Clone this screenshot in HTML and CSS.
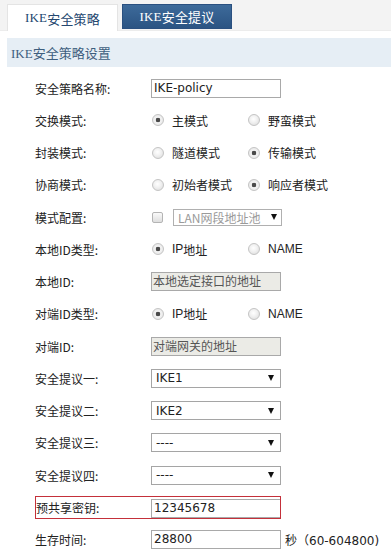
FILE: index.html
```html
<!DOCTYPE html>
<html>
<head>
<meta charset="utf-8">
<link rel="stylesheet" href="styles.css">
</head>
<body>
<div class="tabs">
  <div class="tab active"><span class="lat">IKE</span>安全策略</div>
  <div class="tab other"><span class="lat">IKE</span>安全提议</div>
</div>
<div class="panel-title"><span class="lat">IKE</span>安全策略设置</div>
<div class="form">
  <div class="row"><div class="label">安全策略名称:</div><div class="input">IKE-policy</div></div>
  <div class="row"><div class="label">交换模式:</div>
    <div class="opt"><span class="radio on"></span>主模式</div>
    <div class="opt"><span class="radio"></span>野蛮模式</div></div>
  <div class="row"><div class="label">封装模式:</div>
    <div class="opt"><span class="radio"></span>隧道模式</div>
    <div class="opt"><span class="radio on"></span>传输模式</div></div>
  <div class="row"><div class="label">协商模式:</div>
    <div class="opt"><span class="radio"></span>初始者模式</div>
    <div class="opt"><span class="radio on"></span>响应者模式</div></div>
  <div class="row"><div class="label">模式配置:</div>
    <span class="check"></span>
    <div class="minisel"><span>LAN网段地址池</span><span class="arrow"></span></div></div>
  <div class="row"><div class="label">本地ID类型:</div>
    <div class="opt"><span class="radio on"></span><span class="sans">IP</span>地址</div>
    <div class="opt"><span class="radio"></span><span class="sans">NAME</span></div></div>
  <div class="row"><div class="label">本地ID:</div><div class="input disabled">本地选定接口的地址</div></div>
  <div class="row"><div class="label">对端ID类型:</div>
    <div class="opt"><span class="radio on"></span><span class="sans">IP</span>地址</div>
    <div class="opt"><span class="radio"></span><span class="sans">NAME</span></div></div>
  <div class="row"><div class="label">对端ID:</div><div class="input disabled">对端网关的地址</div></div>
  <div class="row"><div class="label">安全提议一:</div><div class="select"><span>IKE1</span><span class="arrow"></span></div></div>
  <div class="row"><div class="label">安全提议二:</div><div class="select"><span>IKE2</span><span class="arrow"></span></div></div>
  <div class="row"><div class="label">安全提议三:</div><div class="select"><span>----</span><span class="arrow"></span></div></div>
  <div class="row"><div class="label">安全提议四:</div><div class="select"><span>----</span><span class="arrow"></span></div></div>
  <div class="row"><div class="highlight"><div class="label">预共享密钥:</div><div class="input">12345678</div></div></div>
  <div class="row"><div class="label">生存时间:</div><div class="input">28800</div><div class="unit">秒（<span class="num">60-604800)</span></div></div>
</div>
</body>
</html>
```

FILE: styles.css
```css
html, body {
  margin: 0;
  padding: 0;
  background: #ffffff;
}
body {
  font-family: "Noto Sans CJK SC", "DejaVu Sans", sans-serif;
  font-size: 12px;
  color: #222;
  width: 391px;
  overflow: hidden;
}
.lat {
  font-family: "Liberation Serif", serif;
}
.sans {
  font-family: "Liberation Sans", sans-serif;
}
.tabs {
  display: flex;
  align-items: flex-end;
  gap: 4px;
  height: 31px;
  padding-left: 7px;
  box-sizing: border-box;
  background: #f3f3f3;
  border-bottom: 1px solid #ececec;
}
.tab {
  box-sizing: border-box;
  display: flex;
  align-items: center;
  justify-content: center;
  font-size: 13px;
  letter-spacing: 0.2px;
}
.tab.active {
  width: 111px;
  height: 27px;
  margin-bottom: -1px;
  background: #ffffff;
  border: 1px solid #e4e4e4;
  border-bottom: none;
  color: #24476f;
}
.tab.other {
  width: 110px;
  height: 25px;
  margin-bottom: 1px;
  background: linear-gradient(#3d6a9a, #2b5483);
  border: 1px solid #2a5080;
  color: #ffffff;
}
.panel-title {
  margin: 7px 0 0 7px;
  height: 29px;
  line-height: 29px;
  padding-left: 4px;
  background: #e6eef5;
  color: #3e5e7e;
  font-size: 13px;
}
.form {
  padding-top: 5px;
}
.row {
  display: flex;
  align-items: center;
  height: 32.25px;
  padding-left: 35px;
}
.label {
  width: 116px;
  flex: none;
  white-space: nowrap;
}
.input {
  box-sizing: border-box;
  width: 130px;
  height: 19px;
  border: 1px solid #a9a9a9;
  padding-left: 2px;
  font-family: "DejaVu Sans", sans-serif;
  font-size: 12px;
  line-height: 17px;
  color: #222;
  background: #fff;
}
.input.disabled {
  background: #ebebe6;
  color: #555;
  font-family: "Noto Sans CJK SC", sans-serif;
  padding-left: 1px;
  line-height: 16px;
}
.opt {
  display: flex;
  align-items: center;
  width: 96px;
  flex: none;
  white-space: nowrap;
}
.radio {
  box-sizing: border-box;
  width: 12px;
  height: 12px;
  border-radius: 50%;
  border: 1px solid #c4c4c4;
  background: radial-gradient(circle at 45% 40%, #ffffff 0, #f2f2f2 40%, #d9d9d9 100%);
  margin: 0 8px 0 1px;
  flex: none;
}
.radio.on {
  background: radial-gradient(circle, #4a4a4a 0, #4a4a4a 2px, #f4f4f4 2.6px, #e0e0e0 100%);
}
.check {
  box-sizing: border-box;
  width: 11px;
  height: 11px;
  border: 1px solid #b4b4b4;
  border-radius: 2px;
  background: linear-gradient(#fafafa, #dedede);
  margin: 0 10px 0 1px;
  flex: none;
}
.minisel {
  box-sizing: border-box;
  width: 109px;
  height: 17px;
  border: 1px solid #b0b0b0;
  display: flex;
  align-items: center;
  justify-content: space-between;
  padding: 0 4px 0 4px;
  color: #9a9a9a;
}
.select {
  box-sizing: border-box;
  width: 130px;
  height: 19px;
  border: 1px solid #a5a5a5;
  display: flex;
  align-items: center;
  justify-content: space-between;
  padding: 0 6px 0 4px;
  font-family: "DejaVu Sans", sans-serif;
  font-size: 12px;
  color: #222;
}
.arrow {
  width: 0;
  height: 0;
  border-left: 3.5px solid transparent;
  border-right: 3.5px solid transparent;
  border-top: 6px solid #111;
}
.highlight {
  box-sizing: border-box;
  display: flex;
  align-items: flex-end;
  width: 246px;
  height: 23px;
  margin-left: 0;
  border: 1px solid #c4303a;
}
.highlight .label {
  width: 115px;
  align-self: center;
}
.highlight .input {
  height: 19px;
  width: 129px;
  border-right: none;
}
.unit {
  margin-left: 4px;
  white-space: nowrap;
  color: #222;
}
.unit .num {
  font-family: "DejaVu Sans", sans-serif;
}
```
